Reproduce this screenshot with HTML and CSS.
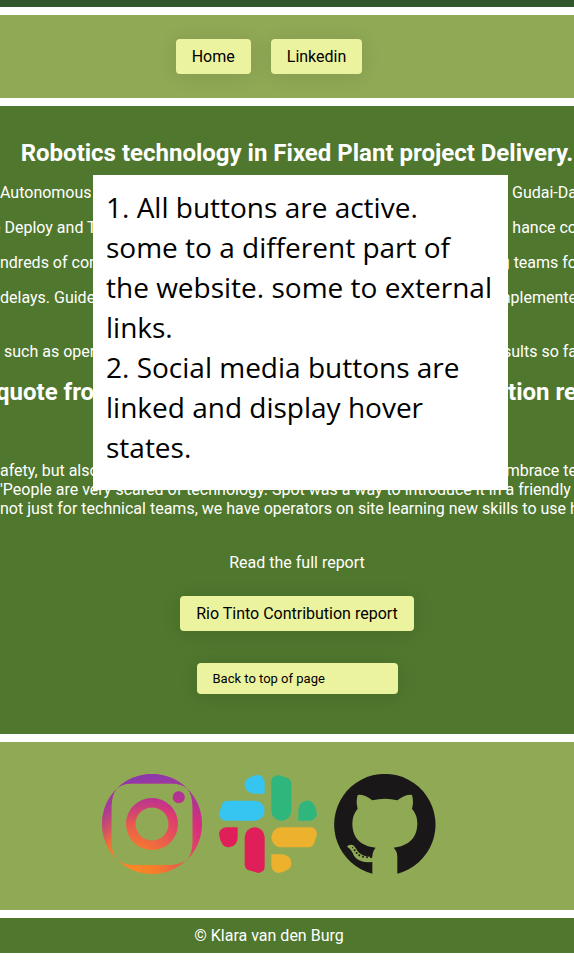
FILE: index.html
```html
<!DOCTYPE html>
<html lang="en">
<head>
<meta charset="utf-8">
<meta name="viewport" content="width=device-width, initial-scale=1">
<title>Robotics technology</title>
<link rel="stylesheet" href="styles.css">
</head>
<body>
<header class="banner"></header>
<nav class="nav">
  <a class="button" href="#">Home</a>
  <a class="button" href="#">Linkedin</a>
</nav>
<main class="main">
  <h2 class="title">Robotics technology in Fixed Plant project Delivery.</h2>
  <p class="line"><span>Autonomous</span><span>Gudai-Da</span></p>
  <p class="line line-cut"><span>e Deploy and T</span><span>hance co</span></p>
  <p class="line"><span>ndreds of con</span><span>g teams fo</span></p>
  <p class="line"><span>delays. Guide</span><span>mplemente</span></p>
  <p class="line line-results"><span>&nbsp;such as oper</span><span>sults so fa</span></p>
  <h2 class="line quote-title"><span>quote fro</span><span>tion re</span></h2>
  <div class="quote">
    <p class="line"><span>afety, but also</span><span>mbrace te</span></p>
    <p class="line"><span>'People are very scared of technology. Spot was a way to introduce it in a friendly w</span></p>
    <p class="line"><span>not just for technical teams, we have operators on site learning new skills to use h</span></p>
  </div>
  <div class="report">
    <p class="report-label">Read the full report</p>
    <a class="button" href="#">Rio Tinto Contribution report</a>
    <button class="button back" type="button">Back to top of page</button>
  </div>
  <aside class="note">1. All buttons are active.<br>some to a different part of<br>the website. some to external<br>links.<br>2. Social media buttons are<br>linked and display hover<br>states.</aside>
</main>
<section class="social">
  <a href="#" aria-label="Instagram">
    <svg class="icon" viewBox="0 0 100 100">
      <defs>
        <radialGradient id="warm" gradientUnits="userSpaceOnUse" cx="26" cy="106" r="88">
          <stop offset="0" stop-color="#fa8f21"/><stop offset=".35" stop-color="#f67c2c"/><stop offset="1" stop-color="#d82d7e"/>
        </radialGradient>
        <radialGradient id="purple" gradientUnits="userSpaceOnUse" cx="61" cy="104" r="103">
          <stop offset=".62" stop-color="#8c3aaa" stop-opacity="0"/><stop offset="1" stop-color="#8c3aaa"/>
        </radialGradient>
        <path id="camera" fill-rule="evenodd" d="M50 0A50 50 0 0 1 50 100A50 50 0 0 1 50 0ZM30 9.500Q20 9.500 14.700 14.700Q10 20 9.500 32V68Q10 80 14.700 85.300Q20 90.500 32 91H68Q80 90.500 85.300 85.300Q90 80 90.500 68V32Q90 20 85.300 14.700Q80 9.500 68 9.500ZM50 24A26 26 0 0 1 50 76A26 26 0 0 1 50 24ZM50 33.500A16.500 16.500 0 0 0 50 66.500A16.500 16.500 0 0 0 50 33.500ZM76.700 17.300A6 6 0 0 1 76.700 29.300A6 6 0 0 1 76.700 17.300Z"/>
      </defs>
      <use href="#camera" fill="url(#warm)"/><use href="#camera" fill="url(#purple)"/>
    </svg>
  </a>
  <a href="#" aria-label="Slack">
    <svg class="icon" viewBox="33 42 300 300">
      <defs>
        <g id="arm">
          <path d="M173 101H143Q116 100 113 76V71Q114 62 121 56Q135 47 154 45Q164 46 170 57Q173 62 173 68Z"/>
          <path d="M36 163L44 135Q49 123 61 122H143A30 30 0 0 1 143 182H58Q47 182 43 178Q37 171 36 163Z"/>
        </g>
      </defs>
      <use href="#arm" fill="#36c5f0"/>
      <use href="#arm" fill="#2eb67d" transform="rotate(90 183 192)"/>
      <use href="#arm" fill="#ecb22e" transform="rotate(180 183 192)"/>
      <use href="#arm" fill="#e01e5a" transform="rotate(270 183 192)"/>
    </svg>
  </a>
  <a href="#" aria-label="GitHub">
    <svg class="icon icon-github" viewBox="33 42 306 306" fill="#191717">
      <path d="M148 341V306Q106 311 92 286Q86 268 72 260Q76 253 88 255Q95 257 103 272Q114 290 148 291Q148 274 158 263C114 259 88 235 88 190Q88 165 104 146Q98 125 104 105Q122 102 148 121Q186 111 223 121Q250 102 267 105Q273 125 267 146Q283 165 283 190C283 235 255 259 212 263Q223 274 223 290V341A152 152 0 1 0 148 341Z"/>
      <circle cx="89" cy="263" r="2"/><circle cx="95" cy="271" r="3"/><circle cx="101" cy="279" r="3"/><circle cx="109" cy="286" r="3"/><circle cx="120" cy="290" r="3"/><circle cx="132" cy="292" r="3"/><circle cx="144" cy="292" r="3"/>
    </svg>
  </a>
</section>
<footer class="footer">© Klara van den Burg</footer>
</body>
</html>
```
FILE: styles.css
```css
* { box-sizing: border-box; }

body {
  display: grid;
  gap: 8px;
  margin: 0;
  padding-bottom: 8px;
  background: #fff;
  color: #fff;
  font: 16px/19px Roboto, sans-serif;
}

h2, p { margin: 0; }

.banner { height: 7px; background: #31572c; }

.nav {
  display: flex;
  justify-content: center;
  gap: 20px;
  padding: 24px 36px 24px 0;
  background: #90a955;
}

.button {
  padding: 8px 16px;
  border: 0;
  border-radius: 4px;
  background: #ecf39e;
  box-shadow: 0 2px 20px rgba(0, 0, 0, 0.1);
  color: #000;
  font: inherit;
  text-decoration: none;
}

.main {
  position: relative;
  display: flex;
  flex-direction: column;
  gap: 16px;
  min-width: 0;
  padding: 32px 0 40px;
  overflow: hidden;
  background: #4f772d;
}

.title, .quote-title {
  padding-top: 2px;
  font-size: 24px;
  line-height: 27px;
}

.title {
  padding-left: 20px;
  text-align: center;
  white-space: nowrap;
}

.line {
  display: flex;
  justify-content: space-between;
  margin-right: -3px;
  white-space: nowrap;
}

.line-cut { margin-left: -8px; }

.line-results { margin-top: 19px; }

.quote-title { margin-left: -4px; }

.quote { margin-top: 39px; }

.report {
  display: flex;
  flex-direction: column;
  align-items: center;
  margin-top: 19px;
  padding-left: 20px;
}

.report-label { margin-bottom: 24px; }

.back {
  width: 201px;
  margin-top: 32px;
  font-size: 13px;
  line-height: 15px;
  text-align: left;
}

.note {
  position: absolute;
  top: 69px;
  left: 93px;
  padding: 12px 13px 23px;
  width: 415px;
  background: #fff;
  color: #000;
  font: 28px/40px "Open Sans", sans-serif;
  white-space: nowrap;
}

.social {
  display: flex;
  justify-content: center;
  gap: 16px;
  padding: 32px 36px 34px 0;
  background: #90a955;
}

.icon { display: block; width: 100px; height: 100px; }

.icon-github { width: 102px; height: 102px; }

.footer {
  padding: 8px 36px 8px 0;
  background: #4f772d;
  text-align: center;
}
```
